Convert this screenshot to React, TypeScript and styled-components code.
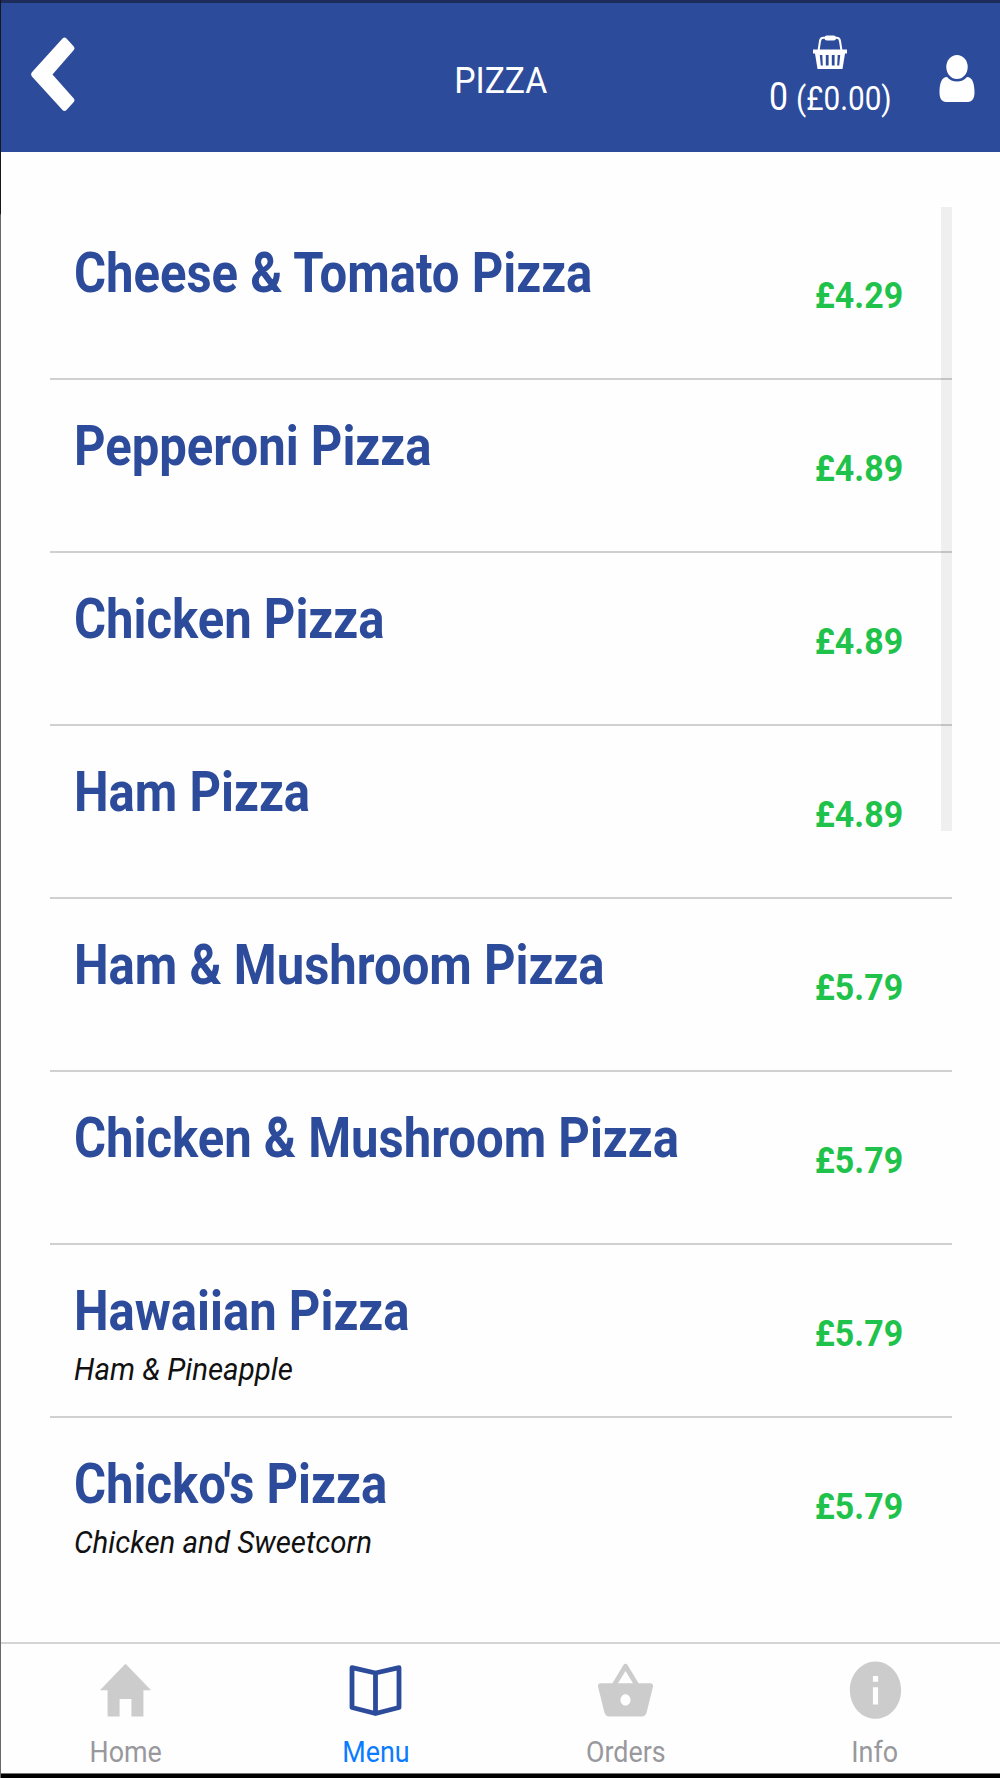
import React from "react";
import styled, { createGlobalStyle } from "styled-components";
import { IoMdHome, IoMdBasket, IoMdInformationCircle } from "react-icons/io";

const Global = createGlobalStyle`
  *{box-sizing:border-box}
  body{margin:0;background:#fff;font-family:Roboto,"Liberation Sans",sans-serif}
  svg{display:block;overflow:visible}
`;

const Screen = styled.div`
  width:1000px;height:1778px;display:flex;flex-direction:column;background:#fefefe;
  border-left:1px solid #606060;
  border-image:linear-gradient(#17181c 0 214px,#68696b 216px) 1;
  border-width:0 0 0 1px;
`;
const Status = styled.div`height:3px;flex:none;background:#1d2c5b;`;
const Header = styled.header`
  height:149px;flex:none;background:#2d4b9b;color:#fff;
  display:grid;grid-template-columns:400px 199px 269px 131px;
`;
const Back = styled.button`
  border:0;background:none;padding:34px 0 0 30px;display:flex;align-items:flex-start;
`;
/* The interface is drawn with horizontally condensed lettering. */
const Text = styled.span<{ $size: number; $x?: number; $origin?: string }>`
  display:block;white-space:nowrap;font-size:${p => p.$size}px;line-height:1.2;
  transform:scaleX(${p => p.$x ?? 0.89});transform-origin:${p => p.$origin ?? "left"} center;
`;
const Title = styled.h1`margin:0;font-weight:400;display:flex;justify-content:center;padding-top:55px;`;
const Cart = styled.div`display:flex;flex-direction:column;padding:32px 0 0 169px;`;
const CartIcon = styled.div`padding-left:43px;height:40px;`;
const Totals = styled.div`display:flex;align-items:baseline;height:46px;`;
const Qty = styled.div`width:27px;flex:none;`;
const Account = styled.div`padding:51px 0 0 70px;`;

const Content = styled.main`flex:1;min-height:0;padding:55px 48px 0 49px;position:relative;`;
const Scroll = styled.div`
  position:absolute;right:48px;top:55px;width:11px;height:624px;background:rgba(0,0,0,.06);
`;
const List = styled.ul`list-style:none;margin:0;padding:0;`;
const Row = styled.li`
  height:173.05px;display:flex;justify-content:space-between;padding:0 49px 0 24px;
  border-bottom:2px solid #d0d0d0;
  &:last-child{border-bottom:0}
`;
const Info = styled.div`padding-top:34px;`;
const Name = styled.div`color:#2d4b9b;font-weight:700;height:72px;`;
const Desc = styled.div`color:#111;font-style:italic;`;
const Price = styled.div`color:#1fc24a;font-weight:700;padding-top:67px;`;

const Tabs = styled.nav`
  height:131px;flex:none;display:grid;grid-template-columns:repeat(4,1fr);
  border-top:2px solid #d4d4d4;
`;
const Tab = styled.div<{ $active?: boolean }>`
  display:flex;flex-direction:column;align-items:center;
  color:${p => (p.$active ? "#0a7cff" : "#98989d")};
`;
const TabIcon = styled.div`
  height:91px;padding-top:11px;color:#ccc;
  svg{width:63px;height:70.4px}
`;
const Bottom = styled.div`height:5px;flex:none;background:#000;border-top:1px solid #777;`;

const items = [
  { name: "Cheese & Tomato Pizza", price: "£4.29" },
  { name: "Pepperoni Pizza", price: "£4.89" },
  { name: "Chicken Pizza", price: "£4.89" },
  { name: "Ham Pizza", price: "£4.89" },
  { name: "Ham & Mushroom Pizza", price: "£5.79" },
  { name: "Chicken & Mushroom Pizza", price: "£5.79" },
  { name: "Hawaiian Pizza", price: "£5.79", desc: "Ham & Pineapple" },
  { name: "Chicko's Pizza", price: "£5.79", desc: "Chicken and Sweetcorn" },
];

const ChevronIcon = () => (
  <svg width="44" height="75" viewBox="0 0 44 75" fill="#fff">
    <path d="M.7 35.5 31.5 1.5q2-1.800 4 0l7.300 8q1.600 1.800 0 3.600L21.500 37.500 42.800 61.500q1.600 1.800 0 3.600l-7.300 8q-2 1.800-4 0L.7 39.200q-1.300-1.800 0-3.700z" />
  </svg>
);
const BasketIcon = () => (
  <svg width="36" height="35" viewBox="0 0 36 35" fill="none" stroke="#fff">
    <path d="M6.500 16 8 6q.5-3.300 3.500-3.300h13q3 0 3.500 3.300l1.500 10" strokeWidth="2" />
    <path d="M15 3h6.500" strokeWidth="5" strokeLinecap="round" />
    <path fillRule="evenodd" fill="#fff" stroke="none" d="M1 14.500h34v4h-2L30.500 34h-25L3 18.500H1zM7.800 20l1 10.500h2L10.300 20zm6 0v10.500h2.800V20zm6 0v10.500h2.800V20zm5.900 0-.5 10.500h2l1-10.500z" />
  </svg>
);
const UserIcon = () => (
  <svg width="36" height="48" viewBox="0 0 36 48" fill="#fff">
    <ellipse cx="18" cy="13" rx="10.700" ry="12" />
    <path d="M8 23q4 4.500 10 4.500T28 23c5.500 0 7.500 6.500 7.500 15.500 0 6-2.500 9.500-6.500 9.500H7c-4 0-6.500-3.500-6.500-9.500C.5 29.500 2.500 23 8 23z" />
  </svg>
);
const BookIcon = () => (
  <svg viewBox="0 0 63 70.4" fill="none" stroke="#2d4b9b" strokeWidth="4.800" strokeLinejoin="round">
    <path d="M31.500 18 8 12.700V52.500L31.500 58.500 55 52.500V12.700zV58.500" />
  </svg>
);

export default function App() {
  return (
    <>
      <Global />
      <Screen>
        <Status />
        <Header>
          <Back aria-label="Back"><ChevronIcon /></Back>
          <Title><Text $size={37.5} $x={0.9} $origin="center">PIZZA</Text></Title>
          <Cart>
            <CartIcon><BasketIcon /></CartIcon>
            <Totals>
              <Qty><Text $size={38}>0</Text></Qty>
              <Text $size={33} $x={0.9}>(£0.00)</Text>
            </Totals>
          </Cart>
          <Account><UserIcon /></Account>
        </Header>
        <Content>
          <List>
            {items.map(it => (
              <Row key={it.name}>
                <Info>
                  <Name><Text $size={54.7} $x={0.896}>{it.name}</Text></Name>
                  {it.desc && <Desc><Text $size={31.5} $x={0.935}>{it.desc}</Text></Desc>}
                </Info>
                <Price><Text $size={36.5} $x={0.93} $origin="right">{it.price}</Text></Price>
              </Row>
            ))}
          </List>
          <Scroll />
        </Content>
        <Tabs>
          <Tab><TabIcon><IoMdHome preserveAspectRatio="none" /></TabIcon><Text $size={29.5} $x={0.91} $origin="center">Home</Text></Tab>
          <Tab $active><TabIcon><BookIcon /></TabIcon><Text $size={29.5} $x={0.91} $origin="center">Menu</Text></Tab>
          <Tab><TabIcon><IoMdBasket preserveAspectRatio="none" /></TabIcon><Text $size={29.5} $x={0.91} $origin="center">Orders</Text></Tab>
          <Tab><TabIcon><IoMdInformationCircle preserveAspectRatio="none" /></TabIcon><Text $size={29.5} $x={0.91} $origin="center">Info</Text></Tab>
        </Tabs>
        <Bottom />
      </Screen>
    </>
  );
}
